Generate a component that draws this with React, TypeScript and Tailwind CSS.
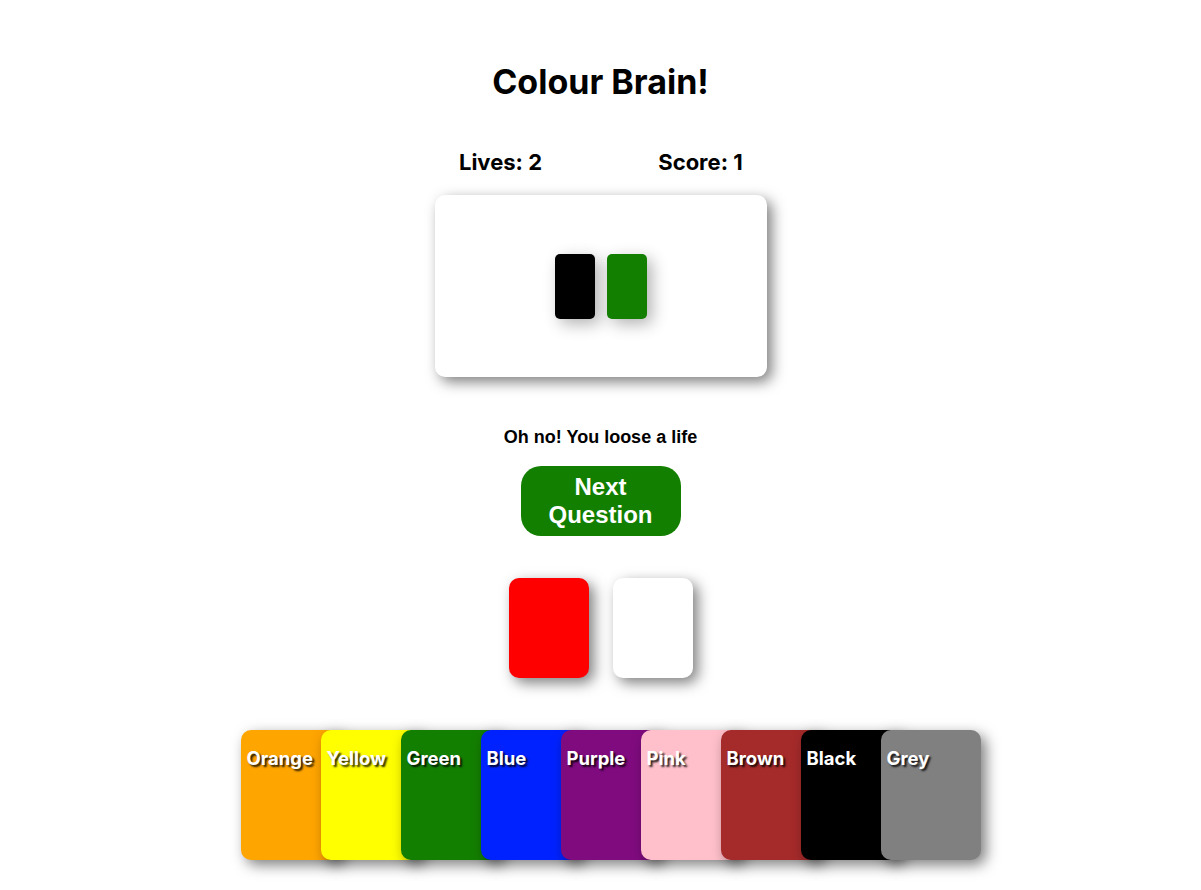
import React from "react";

const colours = [
  { name: "Orange", bg: "bg-[#ffa500]" },
  { name: "Yellow", bg: "bg-[#ffff00]" },
  { name: "Green", bg: "bg-[#137f00]" },
  { name: "Blue", bg: "bg-[#0022ff]" },
  { name: "Purple", bg: "bg-[#800b7f]" },
  { name: "Pink", bg: "bg-[#ffc0cb]" },
  { name: "Brown", bg: "bg-[#a52a2a]" },
  { name: "Black", bg: "bg-[#000000]" },
  { name: "Grey", bg: "bg-[#808080]" },
];

export default function App() {
  return (
    <div className="min-h-[890px] bg-white flex flex-col items-center text-black font-['Inter',sans-serif]">
      <h1 className="mt-[62px] text-[34px] leading-[40px] font-bold">Colour Brain!</h1>
      <div className="mt-[46px] w-[400px] grid grid-cols-2 text-[22px] leading-[28px] font-bold">
        <div className="text-center">Lives: 2</div>
        <div className="text-center">Score: 1</div>
      </div>
      <div className="mt-[19px] w-[332px] h-[182px] rounded-[10px] bg-white shadow-[5px_5px_14px_rgba(0,0,0,0.5)] flex items-center justify-center gap-[12px]">
        <div className="w-[40px] h-[65px] rounded-[5px] bg-black shadow-[5px_5px_16px_rgba(0,0,0,0.3)]" />
        <div className="w-[40px] h-[65px] rounded-[5px] bg-[#137f00] shadow-[5px_5px_16px_rgba(0,0,0,0.3)]" />
      </div>
      <p className="mt-[49px] text-[18px] leading-[22px] font-bold font-['Liberation_Sans',Arial,sans-serif]">
        Oh no! You loose a life
      </p>
      <button className="mt-[18px] w-[160px] h-[70px] rounded-[20px] bg-[#137f00] text-white text-[24px] leading-[28px] font-bold font-['Liberation_Sans',Arial,sans-serif]">
        Next
        <br />
        Question
      </button>
      <div className="mt-[42px] flex gap-[24px]">
        <div className="w-[80px] h-[100px] rounded-[10px] bg-[#ff0000] shadow-[5px_5px_14px_rgba(0,0,0,0.5)]" />
        <div className="w-[80px] h-[100px] rounded-[10px] bg-white shadow-[5px_5px_14px_rgba(0,0,0,0.5)]" />
      </div>
      <div className="mt-[52px] flex">
        {colours.map((c) => (
          <div
            key={c.name}
            className={`w-[100px] h-[130px] mr-[-20px] rounded-[10px] ${c.bg} shadow-[5px_5px_14px_rgba(0,0,0,0.5)] px-[6px] pt-[16px]`}
          >
            <span className="text-white text-[18.5px] leading-[24px] font-bold [text-shadow:2px_2px_2px_rgba(0,0,0,0.85)]">
              {c.name}
            </span>
          </div>
        ))}
      </div>
    </div>
  );
}
